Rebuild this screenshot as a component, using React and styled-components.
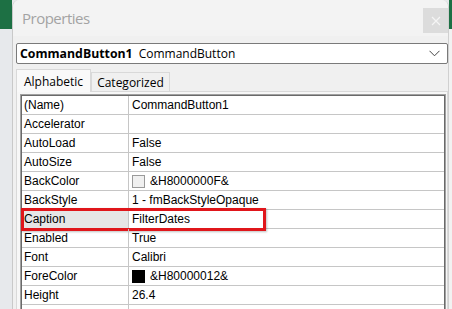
import React from 'react'
import styled, { createGlobalStyle } from 'styled-components';

const GlobalStyle = createGlobalStyle`
  html, body {
    margin: 0;
    padding: 0;
    background: #e8e9eb;
    overflow: hidden;
  }
`;

const Desktop = styled.div`
  display: flex;
  width: 452px;
  height: 309px;
  overflow: hidden;
`;

const Strip = styled.div`
  width: ${({ w }) => w}px;
  flex-shrink: 0;
  display: flex;
  flex-direction: column;
  background: ${({ bg }) => bg};
`;

const Ribbon = styled.div`
  height: 29px;
  background: #1d7044;
`;

const Window = styled.div`
  width: 435px;
  flex-shrink: 0;
  display: flex;
  flex-direction: column;
  background: #f0f0f0;
  border-left: 1px solid #c9c9c9;
  border-right: 1px solid #d0d0d0;
  border-radius: 7px 7px 0 0;
  overflow: hidden;
`;

const TitleBar = styled.div`
  height: 36px;
  flex-shrink: 0;
  display: flex;
  align-items: flex-start;
  justify-content: space-between;
  background: #f3f3f3;
  padding-left: 9px;
`;

const Title = styled.span`
  font-family: "Open Sans", sans-serif;
  font-size: 15px;
  letter-spacing: -0.5px;
  color: #a3a3a3;
  margin-top: 8px;
`;

const CloseBtn = styled.div`
  width: 25px;
  height: 25px;
  margin-top: 8px;
  background: #dcdcdc;
  display: flex;
  align-items: center;
  justify-content: center;
`;

const Body = styled.div`
  display: flex;
  flex-direction: column;
  padding: 7px 0 0 3px;
`;

const Combo = styled.div`
  height: 19px;
  display: flex;
  align-items: center;
  justify-content: space-between;
  background: #fff;
  border: 1px solid #7a7a7a;
  border-radius: 2px;
  padding: 0 7px 0 3px;
  font-family: "Open Sans", sans-serif;
  font-size: 12px;
  color: #000;
`;

const ObjName = styled.span`
  font-weight: 700;
  font-size: 12.3px;
  margin-right: 6px;
`;

const Tabs = styled.div`
  display: flex;
  align-items: flex-end;
  height: 23px;
  margin-top: 4px;
`;

const Tab = styled.div`
  height: ${({ active }) => (active ? 23 : 19)}px;
  box-sizing: border-box;
  padding: 0 ${({ active }) => (active ? 7 : 5)}px;
  display: flex;
  align-items: center;
  background: ${({ active }) => (active ? '#f9f9f9' : '#f0f0f0')};
  border: 1px solid #d9d9d9;
  border-bottom: none;
  font-family: "Open Sans", sans-serif;
  font-size: 12px;
  color: #000;
  margin-bottom: ${({ active }) => (active ? -1 : 0)}px;
  position: relative;
`;

const Panel = styled.div`
  border: 1px solid #d9d9d9;
  border-bottom: none;
  background: #f7f7f7;
  padding: 2px 1px 0 3px;
`;

const GridOuter = styled.div`
  border: 1px solid #a0a0a0;
  border-bottom: none;
`;

const GridInner = styled.div`
  border: 1px solid #6a6a6a;
  border-bottom: none;
  background: #fff;
`;

const Row = styled.div`
  display: grid;
  grid-template-columns: 107px 1fr;
  height: 19px;
  box-sizing: border-box;
  border-bottom: 1px solid #c6c6c6;
  position: relative;
  font-family: "Liberation Sans", Arial, sans-serif;
  font-size: 12px;
  color: #000;
`;

const Cell = styled.div`
  display: flex;
  align-items: center;
  gap: 5px;
  padding-left: ${({ name }) => (name ? 2 : 3)}px;
  border-right: ${({ name }) => (name ? '1px solid #c6c6c6' : 'none')};
  background: ${({ selected }) => (selected ? '#e6e6e6' : 'transparent')};
  white-space: nowrap;
  overflow: hidden;
`;

const Swatch = styled.span`
  width: 13px;
  height: 13px;
  box-sizing: border-box;
  background: ${({ color }) => color};
  border: 1px solid ${({ color }) => (color === '#000' ? '#000' : '#9a9a9a')};
`;

const Highlight = styled.div`
  position: absolute;
  left: -1px;
  top: -2px;
  width: 245px;
  height: 23px;
  box-sizing: border-box;
  border: 3px solid #e0161b;
  box-shadow: 1px 1px 2px rgba(0, 0, 0, 0.25);
  pointer-events: none;
`;

const props = [
  ['(Name)', 'CommandButton1'],
  ['Accelerator', ''],
  ['AutoLoad', 'False'],
  ['AutoSize', 'False'],
  ['BackColor', '&H8000000F&', '#f0f0f0'],
  ['BackStyle', '1 - fmBackStyleOpaque'],
  ['Caption', 'FilterDates'],
  ['Enabled', 'True'],
  ['Font', 'Calibri'],
  ['ForeColor', '&H80000012&', '#000'],
  ['Height', '26.4'],
  ['', ''],
];

const App = () => {
  return (
    <>
      <GlobalStyle />
      <Desktop>
        <Strip w={12} bg="#e7e9ec">
          <Ribbon />
        </Strip>
        <Window>
          <TitleBar>
            <Title>Properties</Title>
            <CloseBtn>
              <svg width="10" height="10" viewBox="0 0 10 10">
                <path d="M1 1L9 9M9 1L1 9" stroke="#f5f5f5" strokeWidth="1.2" />
              </svg>
            </CloseBtn>
          </TitleBar>
          <Body>
            <Combo>
              <span>
                <ObjName>CommandButton1</ObjName>CommandButton
              </span>
              <svg width="11" height="7" viewBox="0 0 11 7">
                <path d="M0.5 0.8L5.5 5.8L10.5 0.8" fill="none" stroke="#444" strokeWidth="1" />
              </svg>
            </Combo>
            <Tabs>
              <Tab active>Alphabetic</Tab>
              <Tab>Categorized</Tab>
            </Tabs>
            <Panel>
              <GridOuter>
                <GridInner>
                  {props.map(([name, value, swatch], i) => (
                    <Row key={i}>
                      <Cell name="1" selected={name === 'Caption'}>{name}</Cell>
                      <Cell>
                        {swatch && <Swatch color={swatch} />}
                        {value}
                      </Cell>
                      {name === 'Caption' && <Highlight />}
                    </Row>
                  ))}
                </GridInner>
              </GridOuter>
            </Panel>
          </Body>
        </Window>
        <Strip w={5} bg="#f2f2f2">
          <Ribbon />
        </Strip>
      </Desktop>
    </>
  )
}

export default App
